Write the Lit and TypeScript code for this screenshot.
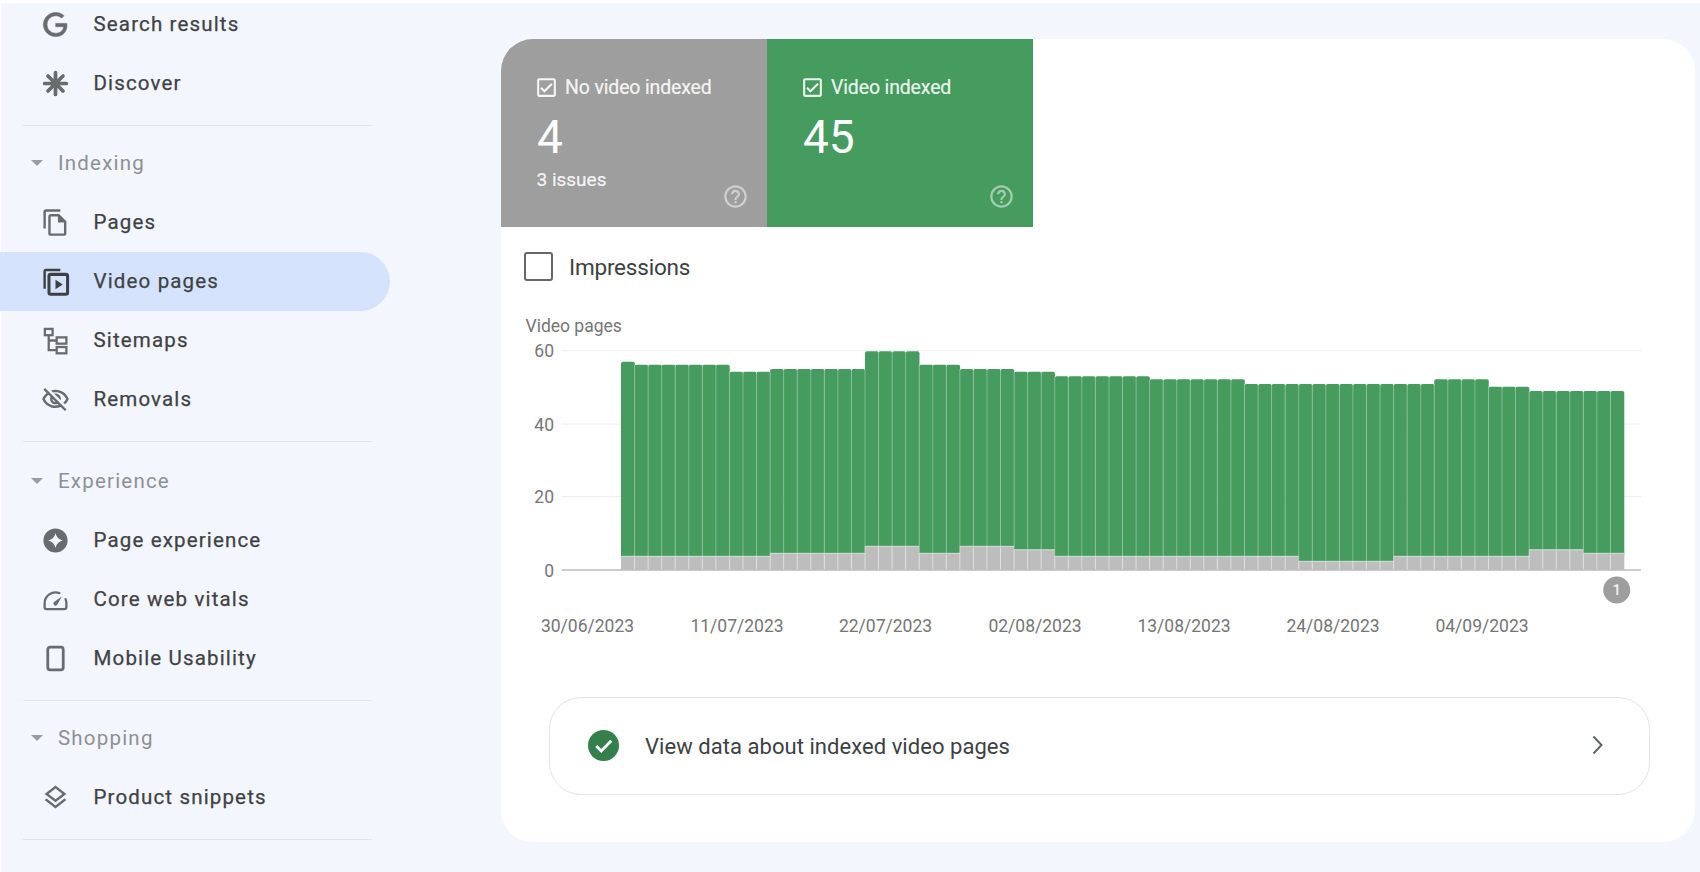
import { LitElement, html, css, svg } from "lit";
import { customElement } from "lit/decorators.js";

const ICONS: Record<string, unknown> = {
  g: svg`<path fill="currentColor" stroke="currentColor" stroke-width=".5" d="M21.35 11.1h-9.17v2.73h6.51c-.33 3.81-3.5 5.44-6.5 5.44C8.36 19.27 5 16.25 5 12c0-4.1 3.2-7.27 7.2-7.27 3.09 0 4.9 1.97 4.9 1.97L19 4.72S16.56 2 12.1 2C6.42 2 2 6.8 2 12c0 5.05 4.13 10 10.22 10 5.35 0 9.25-3.67 9.25-9.09 0-1.15-.12-1.81-.12-1.81z"/>`,
  discover: svg`<g stroke="currentColor" stroke-width="3.1" stroke-linecap="round"><path d="M12 3v18M3 12h18M5.8 5.8l12.4 12.4M18.2 5.800 5.800 18.200"/></g>`,
  pages: svg`<path fill="currentColor" d="M16 1H4c-1.1 0-2 .9-2 2v14h2V3h12V1zm-1 4H8c-1.1 0-1.99.9-1.99 2L6 21c0 1.1.89 2 1.99 2H19c1.1 0 2-.9 2-2V11l-6-6zM8 21V7h6v5h5v9H8z"/>`,
  video: svg`<path fill="currentColor" d="M16 1.5H4c-1.1 0-2 .9-2 2V18h2V3.5h12z"/><rect x="6.600" y="6.100" width="15.400" height="16.400" rx="1.500" fill="none" stroke="currentColor" stroke-width="2.500"/><path fill="currentColor" d="M12 10.500v8l6-4z"/>`,
  sitemap: svg`<g fill="none" stroke="currentColor" stroke-width="1.900"><rect x="3.200" y="2.400" width="6.400" height="5.200"/><rect x="13" y="9.400" width="8" height="5.200"/><rect x="13" y="17.400" width="8" height="5.200"/><path d="M6.400 7.600V20h6.600M6.400 12h6.600"/></g>`,
  removal: svg`<path fill="currentColor" d="M12 6c3.79 0 7.17 2.13 8.82 5.5-.59 1.22-1.42 2.27-2.41 3.12l1.41 1.41c1.39-1.23 2.49-2.77 3.18-4.53C21.27 7.11 17 4 12 4c-1.27 0-2.49.2-3.64.57l1.65 1.65C10.66 6.09 11.32 6 12 6zm-1.07 1.14L13 9.21c.57.25 1.03.71 1.28 1.28l2.07 2.07c.08-.34.14-.7.14-1.07C16.5 9.01 14.48 7 12 7c-.37 0-.72.05-1.07.14zM2.01 3.87l2.68 2.68C3.06 7.83 1.77 9.53 1 11.5 2.73 15.89 7 19 12 19c1.52 0 2.98-.29 4.32-.82l3.42 3.42 1.41-1.41L3.42 2.45 2.01 3.87zm7.5 7.5l2.61 2.61c-.04.01-.08.02-.12.02-1.38 0-2.5-1.12-2.5-2.5 0-.05.01-.08.01-.13zm-3.4-3.4l1.75 1.75c-.23.55-.36 1.15-.36 1.78 0 2.48 2.02 4.5 4.5 4.5.63 0 1.23-.13 1.77-.36l.98.98c-.88.24-1.8.38-2.75.38-3.79 0-7.17-2.13-8.82-5.5.7-1.43 1.72-2.61 2.93-3.53z"/>`,
  experience: svg`<path fill="currentColor" fill-rule="evenodd" d="M12 2a10 10 0 1 0 0 20 10 10 0 0 0 0-20zm0 4c.9 3.300 2.700 5.100 6 6-3.300.9-5.100 2.700-6 6-.9-3.300-2.700-5.100-6-6 3.300-.9 5.100-2.700 6-6z"/>`,
  vitals: svg`<g fill="none" stroke="currentColor" stroke-width="1.900" stroke-linecap="round" stroke-linejoin="round"><path d="M15.200 6.700A9 9 0 0 0 3 15.200V18.500Q3 20 4.600 20H19.400Q21 20 21 18.500V15.200A9 9 0 0 0 20.300 11.700"/></g><path fill="currentColor" d="M17.200 9.500 13.400 16.400a1.800 1.800 0 0 1-2.900-2.100z"/>`,
  mobile: svg`<rect x="5.600" y="2.500" width="12.800" height="19" rx="2" fill="none" stroke="currentColor" stroke-width="2.300"/>`,
  product: svg`<path fill="currentColor" d="M11.990 18.540l-7.370-5.730L3 14.070l9 7 9-7-1.630-1.270-7.380 5.740zM12 16l7.360-5.730L21 9l-9-7-9 7 1.630 1.270L12 16zm0-11.470L17.740 9 12 13.470 6.260 9 12 4.530z"/>`,
};

const CHECK = svg`<path fill="currentColor" d="M19 3H5c-1.100 0-2 .9-2 2v14c0 1.100.9 2 2 2h14c1.100 0 2-.9 2-2V5c0-1.100-.9-2-2-2zm0 16H5V5h14v14zM17.990 9l-1.410-1.420-6.590 6.590-2.580-2.570-1.420 1.410 4 3.990z"/>`;
const HELP = svg`<path fill="currentColor" d="M11 18h2v-2h-2v2zm1-16C6.480 2 2 6.480 2 12s4.480 10 10 10 10-4.480 10-10S17.520 2 12 2zm0 18c-4.410 0-8-3.590-8-8s3.590-8 8-8 8 3.590 8 8-3.590 8-8 8zm0-14c-2.210 0-4 1.790-4 4h2c0-1.100.9-2 2-2s2 .9 2 2c0 2-3 1.750-3 5h2c0-2.250 3-2.500 3-5 0-2.210-1.790-4-4-4z"/>`;

const SECTIONS = [
  { items: [["g", "Search results"], ["discover", "Discover"]] },
  { title: "Indexing", items: [["pages", "Pages"], ["video", "Video pages"], ["sitemap", "Sitemaps"], ["removal", "Removals"]] },
  { title: "Experience", wide: true, items: [["experience", "Page experience"], ["vitals", "Core web vitals"], ["mobile", "Mobile Usability"]] },
  { title: "Shopping", items: [["product", "Product snippets"]] },
];

const BASE = 571;
const BAR_X = 621;
const BAR_W = 13.554;
// [count, bar height in px]
const TOTAL_RUNS = [[1, 208.3], [7, 205.3], [3, 198.3], [7, 201], [4, 218.7], [3, 205.3], [4, 201], [3, 198.3], [7, 193.7], [7, 190.7], [14, 186], [4, 190.7], [3, 183.3], [7, 179]];
const GRAY_RUNS = [[11, 13.7], [7, 16.7], [4, 23.7], [3, 16.7], [4, 23.7], [3, 20.3], [18, 13.7], [7, 8.7], [10, 13.7], [4, 20.3], [3, 16.7]];
const expand = (runs: number[][]) => runs.flatMap(([n, v]) => Array(n).fill(v) as number[]);
const TOTALS = expand(TOTAL_RUNS);
const GRAYS = expand(GRAY_RUNS);
const Y_TICKS: [string, number][] = [["60", 351.7], ["40", 425], ["20", 497.5]];
const DATES: [string, number][] = [["30/06/2023", 587.5], ["11/07/2023", 737], ["22/07/2023", 885.5], ["02/08/2023", 1035], ["13/08/2023", 1184], ["24/08/2023", 1333], ["04/09/2023", 1482]];

@customElement("app-root")
export class AppRoot extends LitElement {
  static styles = css`
    :host { display: block; width: 1700px; height: 872px; overflow: hidden; background: #fff; font-family: Roboto, "Liberation Sans", sans-serif; }
    .page { display: flex; height: 869px; margin: 3px 0 0 1px; background: #f3f6fd; }
    .side { width: 500px; flex: none; margin-top: -8.5px; }
    .row { display: flex; align-items: center; height: 59px; width: 390px; margin-left: -1px; padding-left: 40.5px; box-sizing: border-box; border-radius: 0 29.5px 29.5px 0; color: #696c6f; }
    .row.active { background: #d4e2fb; color: #3c4043; }
    .row svg { width: 29px; height: 29px; flex: none; }
    .row span { margin-left: 24px; font-size: 20.5px; font-weight: 400; letter-spacing: 1.15px; color: #3f4245; -webkit-text-stroke: 0.25px #3f4245; }
    .divider { height: 1px; width: 349px; margin: 12px 0 8px 22px; background: #e3e4e6; }
    .divider.wide { margin-bottom: 10px; }
    .head { display: flex; align-items: center; height: 59px; padding-left: 30px; color: #8d9094; font-size: 20.5px; letter-spacing: 1.2px; }
    .caret { width: 0; height: 0; border: solid transparent; border-width: 6px 6.5px 0; border-top-color: #9a9da0; }
    .head span { margin-left: 15px; }
    .card { width: 1194px; height: 803px; margin-top: 36px; background: #fff; border-radius: 32px; overflow: hidden; display: flex; flex-direction: column; }
    .tiles { display: flex; height: 188px; flex: none; }
    .tile { position: relative; width: 266px; box-sizing: border-box; padding: 38px 0 0 36px; color: #fff; }
    .tile.gray { background: #9e9e9e; }
    .tile.green { background: #469b5f; }
    .tlabel { display: flex; align-items: center; height: 20px; font-size: 19.5px; letter-spacing: -0.15px; color: rgba(255,255,255,.9); -webkit-text-stroke: 0.2px rgba(255,255,255,.9); }
    .tlabel svg { width: 25px; height: 25px; margin-left: -3px; margin-right: 6px; flex: none; }
    .num { font-size: 46px; line-height: 46px; margin-top: 17px; }
    .sub { font-size: 19px; line-height: 24px; margin-top: 8px; letter-spacing: 0; color: rgba(255,255,255,.9); -webkit-text-stroke: 0.2px rgba(255,255,255,.9); margin-left: -0.5px; }
    .help { position: absolute; right: 18px; bottom: 17px; width: 27px; height: 27px; color: rgba(255,255,255,.5); }
    .imp { display: flex; align-items: center; margin: 25px 0 0 23px; height: 29px; font-size: 22.5px; letter-spacing: -0.2px; color: #3c4043; flex: none; }
    .box { width: 29px; height: 29px; box-sizing: border-box; border: 2.5px solid #666; border-radius: 3px; margin-right: 16px; }
    .chart { display: block; width: 1130px; height: 325px; margin: 34px 0 0 20px; flex: none; }
    .chart text { font-family: Roboto, "Liberation Sans", sans-serif; font-size: 17.5px; fill: #757575; }
    .chart .badge-t { font-size: 15px; fill: #f1f1f1; font-weight: 500; }
    .link { display: flex; align-items: center; height: 98px; box-sizing: border-box; margin: 57px 0 0 48px; width: 1101px; padding: 0 46px 0 38px; border: 1.5px solid #e4e4e4; border-radius: 32px; flex: none; color: #3c4043; font-size: 22px; letter-spacing: 0.05px; }
    .link .ok { width: 31px; height: 31px; flex: none; margin-top: -2px; }
    .link .text { margin: 0 auto 0 26px; }
    .link .chev { width: 11px; height: 20px; flex: none; margin-top: -2px; }
  `;

  private bars() {
    return TOTALS.map((t, i) => {
      const x = BAR_X + i * BAR_W;
      const g = GRAYS[i];
      return svg`
        <rect x=${x} y=${BASE - t} width=${BAR_W + 0.3} height=${t - g + 3} rx="2" fill="#469b5f"></rect>
        <rect x=${x} y=${BASE - g} width=${BAR_W + 0.3} height=${g} fill="#bdbdbd"></rect>`;
    });
  }

  private seps() {
    return TOTALS.slice(1).map((t, i) => {
      const x = BAR_X + (i + 1) * BAR_W;
      const g = GRAYS[i + 1];
      return svg`
        <line x1=${x} x2=${x} y1=${BASE - Math.min(t, TOTALS[i])} y2=${BASE - g} stroke="#fff" stroke-opacity=".32"></line>
        <line x1=${x} x2=${x} y1=${BASE - g} y2=${BASE} stroke="#fff" stroke-opacity=".5"></line>`;
    });
  }

  private grayTops() {
    return GRAYS.map((g, i) => svg`<line x1=${BAR_X + i * BAR_W} x2=${BAR_X + (i + 1) * BAR_W} y1=${BASE - g} y2=${BASE - g} stroke="#fff" stroke-opacity=".6"></line>`);
  }

  private tile(kind: string, label: string, num: string, sub?: string) {
    return html`<div class="tile ${kind}">
      <div class="tlabel"><svg viewBox="0 0 24 24">${CHECK}</svg>${label}</div>
      <div class="num">${num}</div>
      ${sub ? html`<div class="sub">${sub}</div>` : ""}
      <svg class="help" viewBox="0 0 24 24">${HELP}</svg>
    </div>`;
  }

  render() {
    return html`<div class="page">
      <nav class="side">
        ${SECTIONS.map((s, n) => html`
          ${s.title ? html`<div class="head"><i class="caret"></i><span>${s.title}</span></div>` : ""}
          ${s.items.map(([ic, label]) => html`<div class="row ${label === "Video pages" ? "active" : ""}"><svg viewBox="0 0 24 24">${ICONS[ic]}</svg><span>${label}</span></div>`)}
          <div class="divider ${SECTIONS[n + 1]?.wide ? "wide" : ""}"></div>
        `)}
      </nav>
      <main class="card">
        <div class="tiles">
          ${this.tile("gray", "No video indexed", "4", "3 issues")}
          ${this.tile("green", "Video indexed", "45")}
        </div>
        <div class="imp"><div class="box"></div>Impressions</div>
        <svg class="chart" viewBox="521 316 1130 325">
          <text x="525.500" y="333">Video pages</text>
          ${Y_TICKS.map(([l, y]) => svg`<line x1="562" x2="1641" y1=${y} y2=${y} stroke="#eeeeee"></line><text x="554" y=${y + 6.5} text-anchor="end">${l}</text>`)}
          <text x="554" y=${BASE + 6.5} text-anchor="end">0</text>
          ${this.bars()}${this.seps()}${this.grayTops()}
          <line x1="562" x2="1641" y1=${BASE} y2=${BASE} stroke="#bdbdbd" stroke-width="1.500"></line>
          <circle cx="1616.700" cy="591" r="13.500" fill="#9e9e9e"></circle>
          <text class="badge-t" x="1616.700" y="596" text-anchor="middle">1</text>
          ${DATES.map(([l, x]) => svg`<text x=${x} y="632.500" text-anchor="middle">${l}</text>`)}
        </svg>
        <div class="link">
          <svg class="ok" viewBox="0 0 30 30"><circle cx="15" cy="15" r="15" fill="#34804c"></circle><path d="M8 15.500l4.800 4.800L22.500 10.500" fill="none" stroke="#fff" stroke-width="2.800"></path></svg>
          <span class="text">View data about indexed video pages</span>
          <svg class="chev" viewBox="0 0 11 20"><path d="M1.500 1.500 9.500 10 1.500 18.500" fill="none" stroke="#5f6368" stroke-width="2"></path></svg>
        </div>
      </main>
    </div>`;
  }
}
